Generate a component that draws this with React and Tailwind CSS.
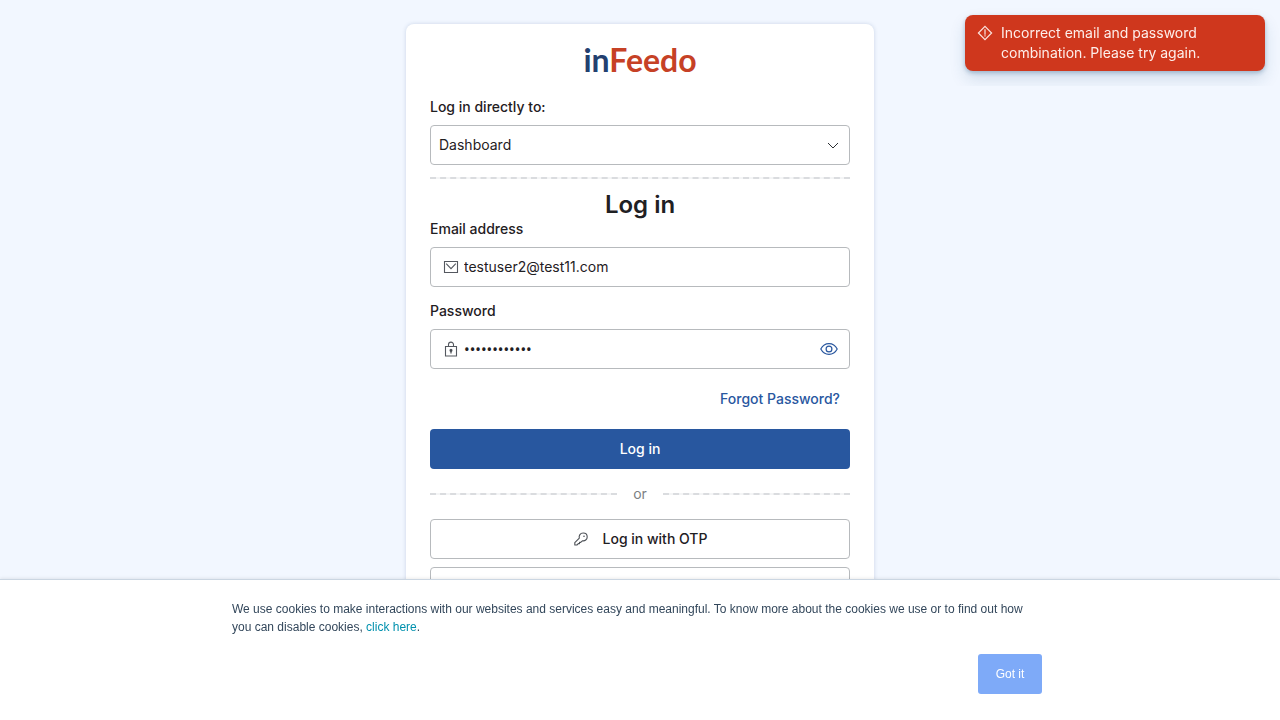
import { useState } from 'react';

function MailIcon() {
  return (
    <svg className="size-4 shrink-0" viewBox="0 0 16 16" fill="none" stroke="#54585f" strokeWidth="1.1" aria-hidden="true">
      <path d="M1.5 2.5h13v11h-13z" />
      <path d="M3.2 4.6 8 9.600l4.800-5" />
    </svg>
  );
}

function LockIcon() {
  return (
    <svg className="size-4 shrink-0" viewBox="0 0 16 16" fill="none" stroke="#54585f" strokeWidth="1.1" aria-hidden="true">
      <path d="M2.500 5.500h11v9.500h-11z" />
      <path d="M5.500 5.500V3.600a2.500 2.500 0 0 1 5 0v1.900" />
      <circle cx="8" cy="9.300" r="1" fill="#33373d" />
      <path d="M8 9.500v3" stroke="#33373d" />
    </svg>
  );
}

function EyeIcon() {
  return (
    <svg className="h-4 w-[18px]" viewBox="0 0 18 16" fill="none" stroke="#29579f" strokeWidth="1.2" aria-hidden="true">
      <path d="M.8 8C2.6 4.600 5.400 2.600 9 2.600S15.400 4.600 17.200 8c-1.800 3.400-4.600 5.400-8.200 5.400S2.600 11.400.8 8z" />
      <circle cx="9" cy="8" r="2.900" />
    </svg>
  );
}

function KeyIcon() {
  return (
    <svg className="size-4" viewBox="0 0 16 16" fill="none" stroke="#4d5157" strokeWidth="1.1" strokeLinejoin="round" aria-hidden="true">
      <path d="M6.300 7.200C5.600 4.500 7.300 2 10.100 2c2.400 0 4.100 1.700 4.100 3.900 0 2.700-2.300 4.400-4.800 3.900L7.700 11.400H6.500v1.200H5.300L3.900 14H1.800v-2.300z" />
      <circle cx="11" cy="5.300" r=".8" fill="#4d5157" stroke="none" />
    </svg>
  );
}

function AlertIcon() {
  return (
    <svg className="mt-0.5 size-4 shrink-0" viewBox="0 0 16 16" fill="none" stroke="#fbe4df" strokeWidth="1.2" aria-hidden="true">
      <path d="M8 1.400 14.600 8 8 14.600 1.400 8z" />
      <path d="M8 4.300v5.400M8 10.200v1.400" />
    </svg>
  );
}

function Divider() {
  return <div className="flex-1 border-t-2 border-dashed border-[#dadcdf] bg-[#f4f5f6]" />;
}

function Toast() {
  return (
    <div className="fixed right-0 top-0 overflow-hidden p-[15px]">
      <div role="alert" className="flex w-[300px] gap-2 rounded-lg bg-[#cf371d] px-3 py-2 text-sm leading-5 text-[#fdeeea] shadow-[0_2px_4px_rgba(24,75,120,0.3),0_8px_16px_rgba(24,75,120,0.15)]">
        <AlertIcon />
        <p>Incorrect email and password combination. Please try again.</p>
      </div>
    </div>
  );
}

function CookieBanner() {
  return (
    <aside className="fixed inset-x-0 bottom-0 border-t border-[#cbd6e2] bg-white font-['Liberation_Sans',sans-serif] text-xs text-[#33475b] shadow-[0_-1px_3px_rgba(0,0,0,0.08)]">
      <div className="mx-auto flex max-w-[840px] flex-col gap-[18px] pb-[26px] pl-3 pr-[18px] pt-5">
        <p className="leading-[18px]">
          We use cookies to make interactions with our websites and services easy and meaningful. To know more about the cookies we use or to find out how you can disable cookies,{' '}
          <a href="#cookies" className="text-[#0091ae]">click here</a>.
        </p>
        <button type="button" className="h-10 w-16 self-end rounded-[3px] bg-[#7eaaf8] text-white">Got it</button>
      </div>
    </aside>
  );
}

export default function App() {
  const [email, setEmail] = useState('testuser2@test11.com');
  const [password, setPassword] = useState('testuser1234');
  const [visible, setVisible] = useState(false);

  return (
    <div className="min-h-screen bg-[#f2f7ff] py-6 font-['Inter',sans-serif] text-sm leading-5 text-[#1f2023]">
      <main className="mx-auto max-w-[468px] rounded-lg bg-white p-6 shadow-[0_0_4px_rgba(30,60,120,0.18)]">
        <div className="text-center font-['Lato',sans-serif] text-[32px] font-bold leading-6 text-[#c64126]">
          <span className="text-[#23406f]">in</span>Feedo
        </div>

        <label htmlFor="target" className="mt-[25px] block font-medium">Log in directly to:</label>
        <div className="relative mt-2">
          <select id="target" className="h-10 w-full appearance-none rounded border border-[#b7babd] bg-white px-2">
            <option>Dashboard</option>
          </select>
          <svg className="pointer-events-none absolute right-[9px] top-3 size-4" viewBox="0 0 16 16" fill="none" stroke="#2c2f33" strokeWidth="1" aria-hidden="true">
            <path d="m3 6 5 5 5-5" />
          </svg>
        </div>
        <div className="mt-3 flex"><Divider /></div>

        <h1 className="mt-3 text-center text-2xl font-semibold leading-7">Log in</h1>
        <form onSubmit={(e) => e.preventDefault()}>
          <label htmlFor="email" className="block font-medium">Email address</label>
          <div className="mt-2 flex h-10 items-center gap-[5px] rounded border border-[#b7babd] px-3">
            <MailIcon />
            <input id="email" type="email" value={email} onChange={(e) => setEmail(e.target.value)} className="min-w-0 flex-1 outline-none" />
          </div>

          <label htmlFor="password" className="mt-[14px] block font-medium">Password</label>
          <div className="mt-2 flex h-10 items-center gap-[5px] rounded border border-[#b7babd] px-3">
            <LockIcon />
            <input id="password" type={visible ? 'text' : 'password'} value={password} onChange={(e) => setPassword(e.target.value)} className="min-w-0 flex-1 font-['Noto_Sans',sans-serif] text-[15px] outline-none" />
            <button type="button" aria-label="Show password" onClick={() => setVisible(!visible)} className="-mr-px">
              <EyeIcon />
            </button>
          </div>

          <div className="mt-5 flex justify-end pr-[10px]">
            <a href="#forgot" className="font-medium text-[#29579f]">Forgot Password?</a>
          </div>
          <button type="submit" className="mt-5 h-10 w-full rounded bg-[#28579f] font-medium text-white">Log in</button>
        </form>

        <div className="my-[15px] flex items-center gap-4 text-[#7c7f83]">
          <Divider />
          or
          <Divider />
        </div>

        <div className="flex flex-col gap-2">
          <button type="button" className="flex h-10 items-center justify-center gap-[14px] rounded border border-[#b7babd] font-medium">
            <KeyIcon />
            Log in with OTP
          </button>
          <button type="button" aria-label="More login options" className="h-10 rounded border border-[#b7babd]" />
        </div>
      </main>
      <Toast />
      <CookieBanner />
    </div>
  );
}
